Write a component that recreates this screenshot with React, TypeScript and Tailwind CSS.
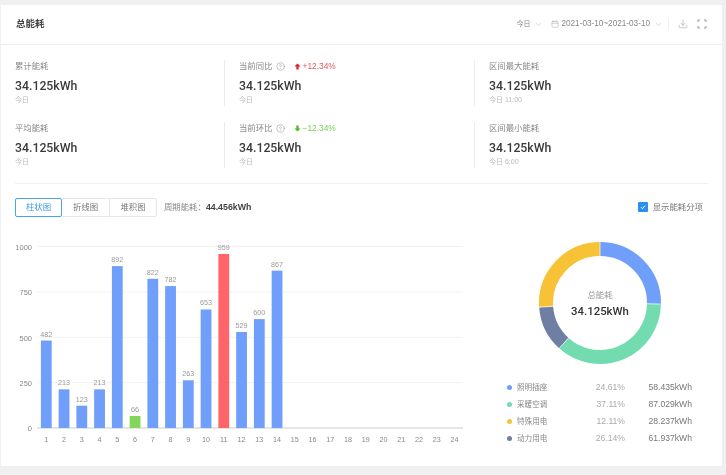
import { Calendar, ChevronDown, CircleHelp, Download } from 'lucide-react'

const bars = [482, 213, 123, 213, 892, 66, 822, 782, 263, 653, 959, 529, 600, 867]
const hours = Array.from({ length: 24 }, (_, i) => i + 1)
const ticks = [1000, 750, 500, 250, 0]

const legend = [
  { name: '照明插座', pct: '24.61%', value: '58.435kWh', dot: 'bg-[#6f9ffb]' },
  { name: '采暖空调', pct: '37.11%', value: '87.029kWh', dot: 'bg-[#72dcb0]' },
  { name: '特殊用电', pct: '12.11%', value: '28.237kWh', dot: 'bg-[#f7c236]' },
  { name: '动力用电', pct: '26.14%', value: '61.937kWh', dot: 'bg-[#6f7fa3]' },
]

// start / end in degrees clockwise from the top
const donut = [
  { from: 0, to: 91, color: '#6f9ffb' },
  { from: 91, to: 222, color: '#72dcb0' },
  { from: 222, to: 266, color: '#6f7fa3' },
  { from: 266, to: 360, color: '#f7c236' },
]

function arc(from: number, to: number) {
  const cx = 600
  const cy = 303
  const r = 54
  const a = ((from - 90) * Math.PI) / 180
  const b = ((to - 90) * Math.PI) / 180
  const large = to - from > 180 ? 1 : 0
  return `M${cx + r * Math.cos(a)} ${cy + r * Math.sin(a)}A${r} ${r} 0 ${large} 1 ${cx + r * Math.cos(b)} ${cy + r * Math.sin(b)}`
}

function barY(v: number) {
  return 428 - v * 0.1815
}

function barX(i: number) {
  return 46.3 + i * 17.75
}

function barColor(v: number) {
  if (v === 959) return '#ff6468'
  if (v === 66) return '#84d65a'
  return '#6f9ffb'
}

function Stat({
  label,
  sub,
  divider,
  extra,
}: {
  label: string
  sub: string
  divider?: boolean
  extra?: React.ReactNode
}) {
  return (
    <div className={divider ? 'h-[46px] border-l border-[#ececec] pl-[14px]' : 'h-[46px]'}>
      <div className="flex h-[12px] items-center text-[8.4px] leading-[12px] text-[#888]">
        {label}
        {extra}
      </div>
      <div className="mt-[6px] font-['Roboto',sans-serif] text-[12.3px] leading-[16px] font-medium text-[#3a3a3a]">34.125kWh</div>
      <div className="text-[7px] leading-[12px] text-[#bbb]">{sub}</div>
    </div>
  )
}

function Compare({ up }: { up: boolean }) {
  return (
    <>
      <CircleHelp className="ml-[3px] h-[9px] w-[9px] text-[#999]" strokeWidth={1.5} />
      <svg viewBox="0 0 8 8" className="ml-[9px] h-[7px] w-[7px]">
        {up ? (
          <path d="M4 .5 7.5 4H5.3v3.5H2.7V4H.5z" fill="#d9252b" />
        ) : (
          <path d="M4 7.5 7.5 4H5.3V.5H2.7V4H.5z" fill="#52b72b" />
        )}
      </svg>
      <span className={up ? 'ml-[2px] text-[#dc5a5e]' : 'ml-[2px] text-[#7ccf5a]'}>
        {up ? '+12.34%' : '−12.34%'}
      </span>
    </>
  )
}

export default function App() {
  return (
    <div className="h-[475px] overflow-hidden bg-[#f0f0f0] pt-[5px] pr-[4px] pl-[1px] font-['Liberation_Sans','Noto_Sans_CJK_SC',sans-serif] blur-[0.4px]">
      <div className="h-[461px] bg-white">
        <div className="flex h-[40px] items-center border-b border-[#f0f0f0] pr-[15px] pl-[15px]">
          <div className="text-[9.5px] font-bold text-[#444]">总能耗</div>
          <div className="ml-auto flex items-center text-[8.2px] text-[#888]">
            <span className="text-[7px]">今日</span>
            <ChevronDown className="ml-[4px] h-[9px] w-[9px] text-[#aaa]" strokeWidth={1.25} />
            <Calendar className="ml-[8px] h-[8px] w-[8px] text-[#999]" strokeWidth={1.25} />
            <span className="ml-[2px]">2021-03-10~2021-03-10</span>
            <ChevronDown className="ml-[4px] h-[9px] w-[9px] text-[#aaa]" strokeWidth={1.25} />
            <div className="ml-[5px] h-[10px] border-l border-[#eee]" />
            <Download className="ml-[9px] h-[10px] w-[10px] text-[#999]" strokeWidth={1.25} />
            <svg viewBox="0 0 10 10" className="ml-[9px] h-[10px] w-[10px]" fill="none" stroke="#999" strokeWidth="1">
              <path d="M1 3V1h2M7 1h2v2M9 7v2H7M3 9H1V7" />
            </svg>
          </div>
        </div>

        <div className="pr-[14px] pl-[14px]">
          <div className="mt-[15px] grid grid-cols-[209px_250px_1fr] gap-y-[16px]">
            <Stat label="累计能耗" sub="今日" />
            <Stat label="当前同比" sub="今日" divider extra={<Compare up />} />
            <Stat label="区间最大能耗" sub="今日 11:00" divider />
            <Stat label="平均能耗" sub="今日" />
            <Stat label="当前环比" sub="今日" divider extra={<Compare up={false} />} />
            <Stat label="区间最小能耗" sub="今日 6:00" divider />
          </div>

          <div className="mt-[15px] border-t border-[#f0f0f0]" />

          <div className="mt-[14px] flex h-[19px] items-center text-[8.4px]">
            <div className="flex h-full w-[47px] items-center justify-center rounded-[2px] border border-[#4aa3e2] text-[#3d9ae0]">
              柱状图
            </div>
            <div className="flex h-full w-[47px] items-center justify-center border-y border-[#e6e6e6] text-[#777]">
              折线图
            </div>
            <div className="flex h-full w-[48px] items-center justify-center rounded-r-[2px] border border-[#e6e6e6] text-[#777]">
              堆积图
            </div>
            <span className="ml-[7px] text-[#888]">周期能耗：</span>
            <span className="text-[8.8px] font-bold text-[#444]">44.456kWh</span>
            <div className="ml-auto flex items-center pr-[5px]">
              <div className="flex h-[10px] w-[10px] items-center justify-center rounded-[1px] bg-[#2b8ff0]">
                <svg viewBox="0 0 10 10" className="h-[10px] w-[10px]" fill="none" stroke="#fff" strokeWidth="1">
                  <path d="M3 5.2 4.5 6.7 7 3.6" />
                </svg>
              </div>
              <span className="ml-[5px] text-[#777]">显示能耗分项</span>
            </div>
          </div>

          <div className="mt-[18px] flex">
            <svg viewBox="15 235 455 210" className="h-[210px] w-[455px] shrink-0 font-['Liberation_Sans',sans-serif]">
              {ticks.map((t) => {
                const y = barY(t)
                return (
                  <g key={t}>
                    <line x1="37" x2="463" y1={y} y2={y} stroke={t === 0 ? '#dcdcdc' : '#eeeeee'} strokeWidth={t === 0 ? 1.3 : 0.8} />
                    <text x="32" y={y + 3.3} textAnchor="end" fontSize="7.5" fill="#888">
                      {t}
                    </text>
                  </g>
                )
              })}
              {bars.map((v, i) => (
                <g key={i}>
                  <rect x={barX(i) - 5.4} y={barY(v)} width="10.8" height={428 - barY(v)} fill={barColor(v)} />
                  <text x={barX(i)} y={barY(v) - 4} textAnchor="middle" fontSize="7.2" fill="#999">
                    {v}
                  </text>
                </g>
              ))}
              {hours.map((h, i) => (
                <text key={h} x={barX(i)} y="441.5" textAnchor="middle" fontSize="7.2" fill="#888">
                  {h}
                </text>
              ))}
            </svg>

            <div className="ml-[30px] w-[200px]">
              <svg viewBox="535 238 130 130" className="mx-auto mt-[3px] h-[130px] w-[130px]" fill="none">
                {donut.map((s) => (
                  <path key={s.color} d={arc(s.from, s.to)} stroke={s.color} strokeWidth="14" />
                ))}
                {[0, 91, 222, 266].map((a) => (
                  <line
                    key={a}
                    x1={600 + 46 * Math.sin((a * Math.PI) / 180)}
                    y1={303 - 46 * Math.cos((a * Math.PI) / 180)}
                    x2={600 + 62 * Math.sin((a * Math.PI) / 180)}
                    y2={303 - 62 * Math.cos((a * Math.PI) / 180)}
                    stroke="#fff"
                    strokeWidth="0.7"
                  />
                ))}
                <text x="600" y="298" textAnchor="middle" fontSize="8.4" fill="#999" fontFamily="'Noto Sans CJK SC', sans-serif">
                  总能耗
                </text>
                <text x="600" y="314.5" textAnchor="middle" fontSize="11.4" fontWeight="500" fill="#333" fontFamily="Roboto, sans-serif">
                  34.125kWh
                </text>
              </svg>

              <div className="mt-[11px] ml-[7px] w-[185px]">
                {legend.map((row) => (
                  <div key={row.name} className="flex h-[17px] items-center text-[8.6px]">
                    <span className={`h-[5px] w-[5px] rounded-full ${row.dot}`} />
                    <span className="ml-[5px] text-[7.6px] text-[#888]">{row.name}</span>
                    <span className="ml-auto text-[#aaa]">{row.pct}</span>
                    <span className="w-[67px] text-right text-[#777]">{row.value}</span>
                  </div>
                ))}
              </div>
            </div>
          </div>
        </div>
      </div>
    </div>
  )
}
